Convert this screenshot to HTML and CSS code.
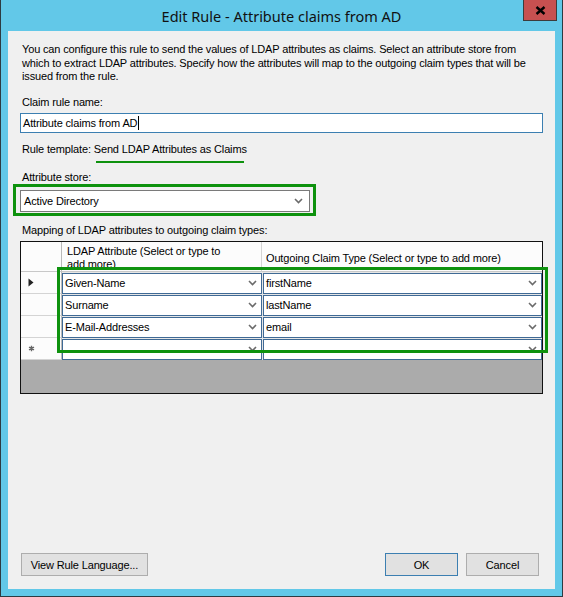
FILE: index.html
```html
<!DOCTYPE html>
<html>
<head>
<meta charset="utf-8">
<link rel="stylesheet" href="styles.css">
</head>
<body>
<div class="window">
  <div class="titlebar">
    <span class="title">Edit Rule - Attribute claims from AD</span>
    <div class="close">
      <svg width="11" height="9" viewBox="0 0 11 9"><path d="M1.5 1 L9.5 8 M9.5 1 L1.5 8" stroke="#000" stroke-width="2.4" fill="none"/></svg>
    </div>
  </div>
  <div class="client">
    <p class="desc">You can configure this rule to send the values of LDAP attributes as claims. Select an attribute store from<br>which to extract LDAP attributes. Specify how the attributes will map to the outgoing claim types that will be<br>issued from the rule.</p>
    <div class="lbl lbl-name">Claim rule name:</div>
    <div class="textbox">Attribute claims from AD<span class="caret"></span></div>
    <div class="template">Rule template: <span class="tmpl-name">Send LDAP Attributes as Claims</span></div>
    <div class="lbl lbl-store">Attribute store:</div>
    <div class="store-mark">
      <div class="combo store">
        <span class="combo-text">Active Directory</span>
        <svg class="chev" width="9" height="6" viewBox="0 0 9 6"><path d="M1 1 L4.5 4.5 L8 1" stroke="#6b6b6b" stroke-width="1.6" fill="none"/></svg>
      </div>
    </div>
    <div class="lbl lbl-map">Mapping of LDAP attributes to outgoing claim types:</div>
    <div class="grid-wrap">
      <div class="grid">
        <div class="hcell corner"></div>
        <div class="hcell h1">LDAP Attribute (Select or type to add more)</div>
        <div class="hcell h2">Outgoing Claim Type (Select or type to add more)</div>

        <div class="rowhead"><svg width="6" height="9" viewBox="0 0 6 9"><path d="M0.5 0.5 L5.5 4.5 L0.5 8.5 Z" fill="#222"/></svg></div>
        <div class="dcell"><div class="combo"><span class="combo-text">Given-Name</span><svg class="chev" width="9" height="6" viewBox="0 0 9 6"><path d="M1 1 L4.5 4.5 L8 1" stroke="#6b6b6b" stroke-width="1.6" fill="none"/></svg></div></div>
        <div class="dcell"><div class="combo"><span class="combo-text">firstName</span><svg class="chev" width="9" height="6" viewBox="0 0 9 6"><path d="M1 1 L4.5 4.5 L8 1" stroke="#6b6b6b" stroke-width="1.6" fill="none"/></svg></div></div>

        <div class="rowhead"></div>
        <div class="dcell"><div class="combo"><span class="combo-text">Surname</span><svg class="chev" width="9" height="6" viewBox="0 0 9 6"><path d="M1 1 L4.5 4.5 L8 1" stroke="#6b6b6b" stroke-width="1.6" fill="none"/></svg></div></div>
        <div class="dcell"><div class="combo"><span class="combo-text">lastName</span><svg class="chev" width="9" height="6" viewBox="0 0 9 6"><path d="M1 1 L4.5 4.5 L8 1" stroke="#6b6b6b" stroke-width="1.6" fill="none"/></svg></div></div>

        <div class="rowhead"></div>
        <div class="dcell"><div class="combo"><span class="combo-text">E-Mail-Addresses</span><svg class="chev" width="9" height="6" viewBox="0 0 9 6"><path d="M1 1 L4.5 4.5 L8 1" stroke="#6b6b6b" stroke-width="1.6" fill="none"/></svg></div></div>
        <div class="dcell"><div class="combo"><span class="combo-text">email</span><svg class="chev" width="9" height="6" viewBox="0 0 9 6"><path d="M1 1 L4.5 4.5 L8 1" stroke="#6b6b6b" stroke-width="1.6" fill="none"/></svg></div></div>

        <div class="rowhead"><svg width="7" height="7" viewBox="0 0 7 7"><path d="M3.5 0.8 V6.2 M1 2.2 L6 4.8 M6 2.2 L1 4.8" stroke="#666" stroke-width="1.4" fill="none"/></svg></div>
        <div class="dcell"><div class="combo"><span class="combo-text"></span><svg class="chev" width="9" height="6" viewBox="0 0 9 6"><path d="M1 1 L4.5 4.5 L8 1" stroke="#6b6b6b" stroke-width="1.6" fill="none"/></svg></div></div>
        <div class="dcell"><div class="combo"><span class="combo-text"></span><svg class="chev" width="9" height="6" viewBox="0 0 9 6"><path d="M1 1 L4.5 4.5 L8 1" stroke="#6b6b6b" stroke-width="1.6" fill="none"/></svg></div></div>
      </div>
      <div class="rows-mark"></div>
    </div>
    <div class="buttons">
      <button class="btn btn-lang">View Rule Language...</button>
      <div class="btn-group">
        <button class="btn btn-ok">OK</button>
        <button class="btn btn-cancel">Cancel</button>
      </div>
    </div>
  </div>
</div>
</body>
</html>
```
FILE: styles.css
```css
* { box-sizing: border-box; }
html, body { margin: 0; padding: 0; background: #62c8e8; }
body { font-family: "Liberation Sans", Arial, sans-serif; font-size: 11px; letter-spacing: -0.15px; color: #000; }

.window {
  width: 563px;
  height: 597px;
  background: #62c8e8;
  border: 1px solid #2d3b42;
  border-top: none;
  display: flex;
  flex-direction: column;
  position: relative;
}

.titlebar {
  height: 31px;
  display: flex;
  align-items: center;
  justify-content: center;
  position: relative;
  padding-top: 1px;
}
.title {
  font-family: "Noto Sans", "Open Sans", sans-serif;
  font-size: 14.5px;
  letter-spacing: 0;
  color: #111;
}
.close {
  position: absolute;
  top: 0;
  left: 522px;
  width: 34px;
  height: 21px;
  background: #c75050;
  border: 1px solid #3c3c3c;
  border-top: none;
  display: flex;
  align-items: center;
  justify-content: center;
}

.client {
  flex: 1;
  margin: 0 7px 7px 7px;
  background: #f0f0f0;
  padding: 12px 12px 13px 12px;
  display: flex;
  flex-direction: column;
}

.desc {
  margin: 0 0 0 2px;
  line-height: 13.5px;
}
.lbl { line-height: 13px; margin-left: 2px; }
.lbl-name { margin-top: 12px; }
.textbox {
  margin-top: 4px;
  height: 20px;
  background: #fff;
  border: 1px solid #3c7fb1;
  padding: 0 0 0 2px;
  display: flex;
  align-items: center;
}
.caret {
  display: inline-block;
  width: 1px;
  height: 14px;
  background: #000;
  margin-left: 1px;
}
.template {
  margin-top: 10px;
  margin-left: 2px;
  line-height: 13px;
}
.tmpl-name {
  position: relative;
}
.tmpl-name::after {
  content: "";
  position: absolute;
  left: 2px;
  right: 3px;
  bottom: -8px;
  height: 2px;
  background: #0e920e;
}
.lbl-store { margin-top: 15px; }

.store-mark {
  margin-top: 0;
  margin-left: -7px;
  width: 303px;
  height: 32px;
  border: 3px solid #0e920e;
  padding: 3px 3px 0 4px;
}
.combo {
  height: 22px;
  background: #fff;
  border: 1px solid #7a7a7a;
  display: flex;
  align-items: center;
  justify-content: space-between;
  padding: 0 5px 0 3px;
}
.combo.store .chev { margin-right: 1px; }

.lbl-map { margin-top: 8px; }

.grid-wrap {
  margin-top: 4px;
  position: relative;
}
.grid {
  height: 153px;
  border: 1px solid #111;
  background: #ababab;
  display: grid;
  grid-template-columns: 41px 200px 1fr;
  grid-template-rows: 30px repeat(4, 22px);
  align-content: start;
}
.hcell {
  background: #fcfcfc;
  border-right: 1px solid #d4d4d4;
  border-bottom: 1px solid #c8c8c8;
  overflow: hidden;
  line-height: 13px;
}
.corner { border-right: 1px solid #b9b9b9; }
.h1 { padding: 3px 26px 0 5px; }
.h2 { padding: 10px 0 0 4px; border-right: none; }

.rowhead {
  background: #fcfcfc;
  border-right: 1px solid #b9b9b9;
  border-bottom: 1px solid #d4d4d4;
  display: flex;
  align-items: center;
  padding-left: 7px;
}
.dcell {
  background: #e6e6e6;
  padding-top: 1px;
}
.dcell .combo {
  height: 21px;
  border: 1px solid #3f6a95;
  padding: 0 4px 0 2px;
}
.dcell + .dcell { padding-left: 1px; }

.rows-mark {
  position: absolute;
  left: 37px;
  top: 26px;
  width: 491px;
  height: 86px;
  border: 3px solid #0e920e;
}

.buttons {
  margin-top: auto;
  display: flex;
  justify-content: space-between;
  align-items: flex-end;
  padding: 0 4px 0 1px;
}
.btn {
  font-family: "Liberation Sans", Arial, sans-serif;
  font-size: 11px;
  letter-spacing: -0.15px;
  color: #000;
  height: 23px;
  background: #e1e1e1;
  border: 1px solid #adadad;
  padding: 0;
  margin: 0;
}
.btn-lang { width: 127px; }
.btn-group { display: flex; gap: 8px; }
.btn-ok { width: 73px; border-color: #3c7fb1; }
.btn-cancel { width: 73px; }
```
